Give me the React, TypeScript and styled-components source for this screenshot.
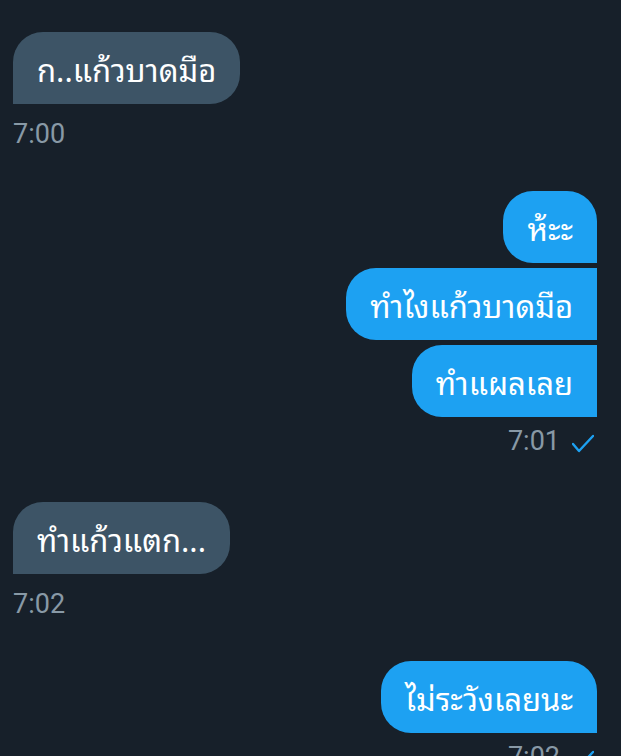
import React from "react";
import styled, { createGlobalStyle } from "styled-components";

const Global = createGlobalStyle`
  html, body { margin: 0; padding: 0; background: #17202a; }
  body { font-family: "Noto Sans Thai Looped", "Noto Sans Thai UI", Loma, Garuda, "Noto Sans Thai", "Noto Sans", Roboto, sans-serif; }
`;

const Page = styled.div`
  width: 621px;
  height: 756px;
  overflow: hidden;
  box-sizing: border-box;
  padding: 32px 24px 0 13px;
  display: flex;
  flex-direction: column;
`;

const Group = styled.div<{ $out?: boolean }>`
  display: flex;
  flex-direction: column;
  align-items: ${(p) => (p.$out ? "flex-end" : "flex-start")};
  gap: 5px;
  margin-bottom: ${(p) => (p.$out ? "46px" : "42px")};
`;

const Bubble = styled.div<{ $out?: boolean; $pos: "single" | "first" | "mid" | "last" }>`
  height: 72px;
  box-sizing: border-box;
  padding: 0 24px 0 24px;
  display: flex;
  align-items: center;
  font-size: 31px;
  color: #ffffff;
  background: ${(p) => (p.$out ? "#1da1f2" : "#3d5466")};
  border-radius: ${(p) => {
    if (!p.$out) return "30px 30px 30px 0";
    if (p.$pos === "first" || p.$pos === "single") return "30px 30px 0 30px";
    return "30px 0 0 30px";
  }};
`;

const Meta = styled.div<{ $out?: boolean }>`
  display: flex;
  align-items: center;
  gap: 12px;
  margin-top: ${(p) => (p.$out ? "4px" : "10px")};
  margin-right: ${(p) => (p.$out ? "3px" : "0")};
  font-family: Roboto, sans-serif;
  font-size: 27px;
  line-height: 30px;
  color: #8899a6;
`;

const CheckIcon = styled.svg`
  width: 22px;
  height: 20px;
  margin-top: 6px;
`;

const Check = () => (
  <CheckIcon viewBox="0 0 22 20">
    <path d="M1 10 L7 17 L21 2" fill="none" stroke="#1da1f2" strokeWidth="2.4" strokeLinecap="round" strokeLinejoin="round" />
  </CheckIcon>
);

export default function App() {
  return (
    <>
      <Global />
      <Page>
        <Group>
          <Bubble $pos="single">ก..แก้วบาดมือ</Bubble>
          <Meta>7:00</Meta>
        </Group>
        <Group $out>
          <Bubble $out $pos="first">ห้ะะ</Bubble>
          <Bubble $out $pos="mid">ทำไงแก้วบาดมือ</Bubble>
          <Bubble $out $pos="last">ทำแผลเลย</Bubble>
          <Meta $out>
            7:01 <Check />
          </Meta>
        </Group>
        <Group>
          <Bubble $pos="single">ทำแก้วแตก...</Bubble>
          <Meta>7:02</Meta>
        </Group>
        <Group $out>
          <Bubble $out $pos="single">ไม่ระวังเลยนะ</Bubble>
          <Meta $out>
            7:02 <Check />
          </Meta>
        </Group>
      </Page>
    </>
  );
}
